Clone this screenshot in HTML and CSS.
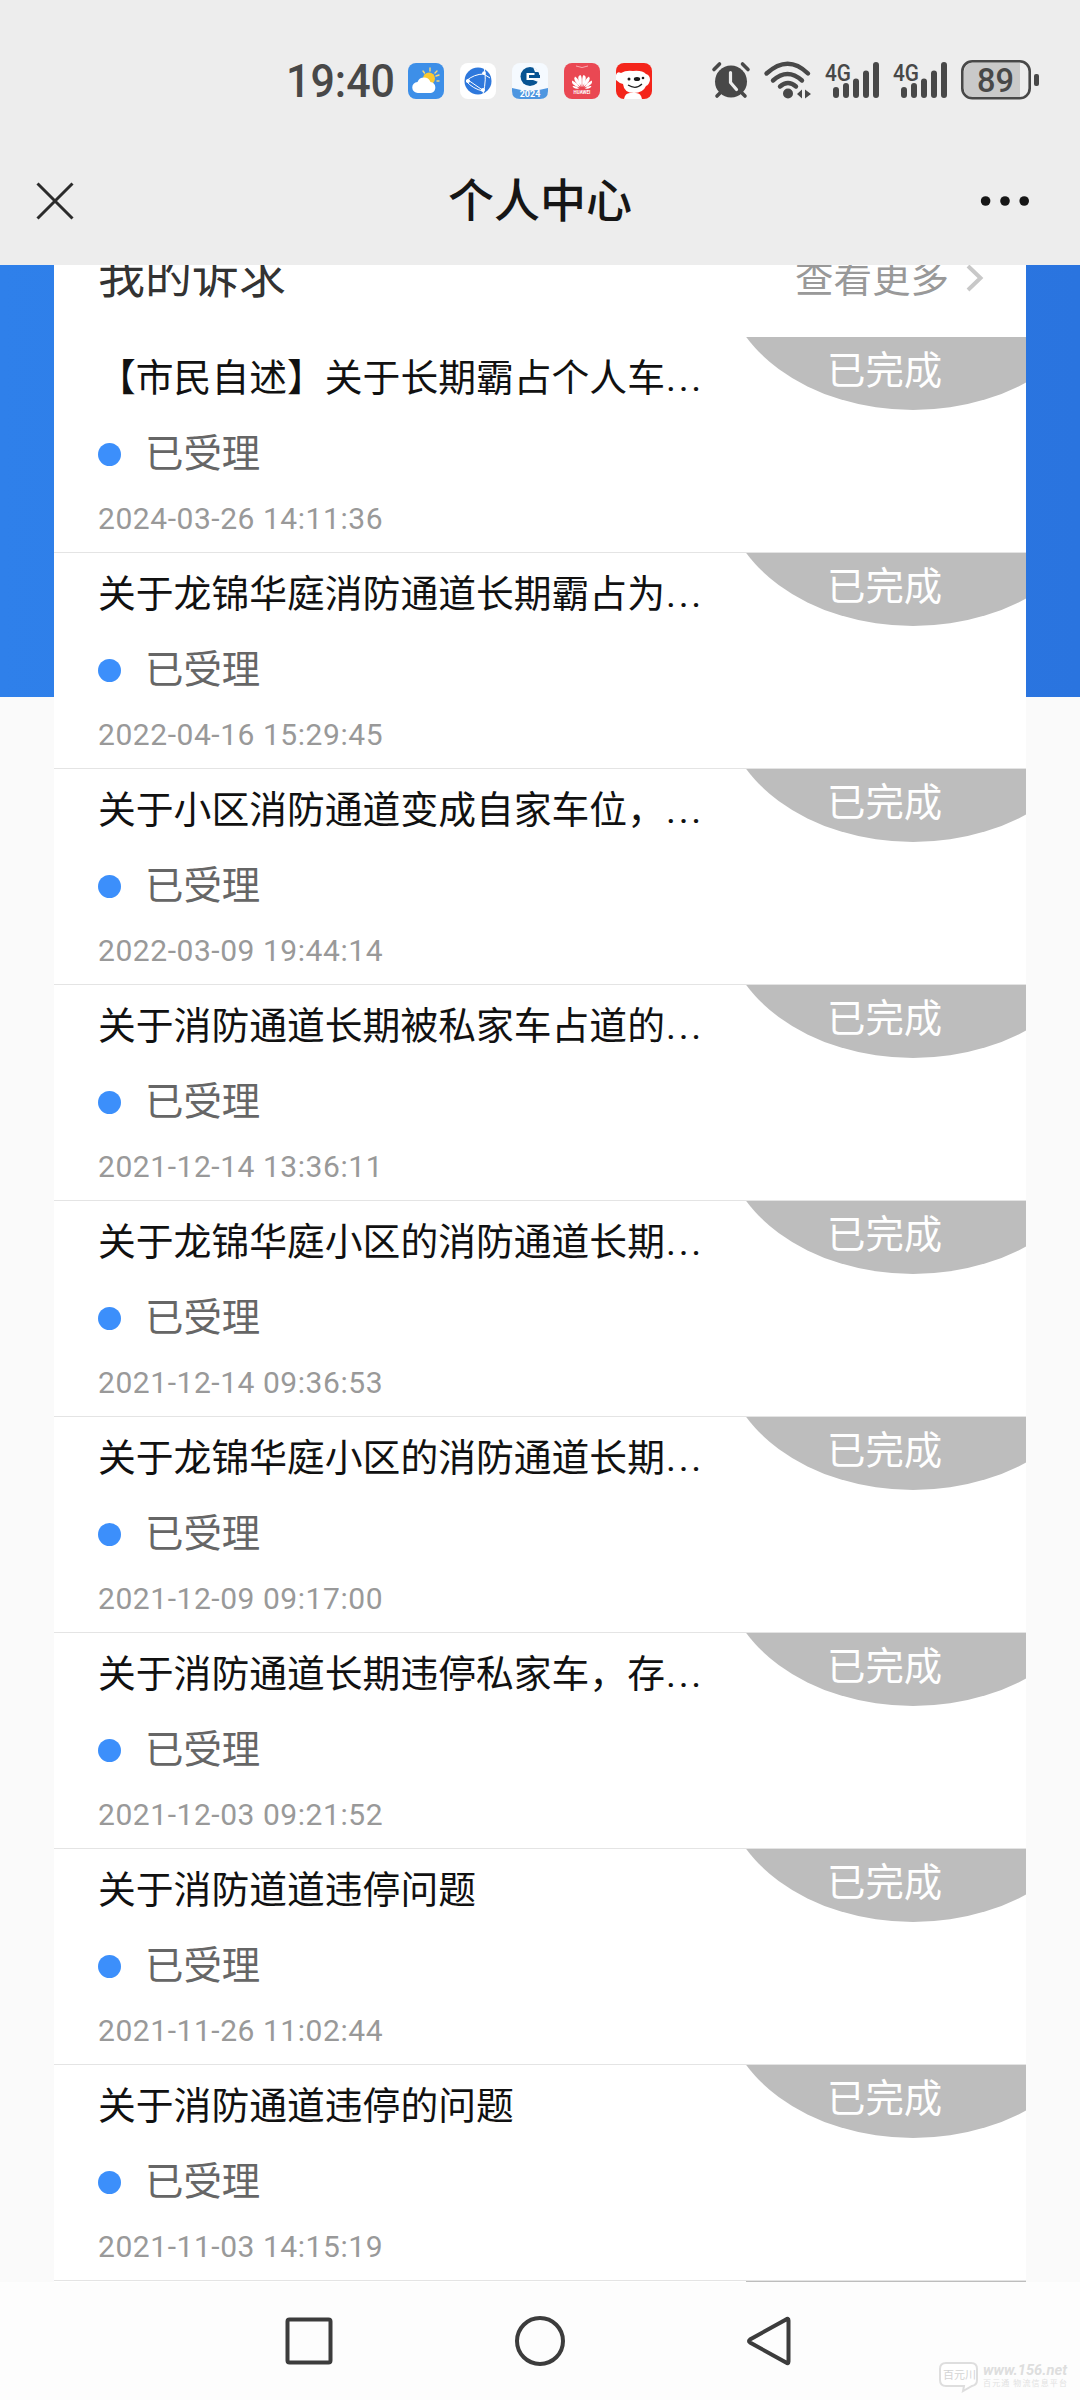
FILE: index.html
```html
<!DOCTYPE html>
<html lang="zh-CN">
<head>
<meta charset="utf-8">
<title>个人中心</title>
<link rel="stylesheet" href="styles.css">
</head>
<body>
<header class="top">
  <div class="status-bar">
    <svg class="clock" viewBox="0 0 122 56"><text x="0" y="45" textLength="109" lengthAdjust="spacingAndGlyphs">19:40</text></svg>
    <div class="apps">
      <svg viewBox="0 0 36 36"><rect width="36" height="36" rx="8" fill="#3d8fe8"/><g stroke="#f6d878" stroke-width="1.4" stroke-linecap="round"><path d="M22 5v3M15 8l1.500 2M29 8l-2 2M31 18h-2M28 13l3-1"/></g><circle cx="21" cy="15.500" r="6" fill="#fbc92f"/><path d="M10 30a5.500 5.500 0 0 1-.5-11 7 7 0 0 1 13 0 5.600 5.600 0 0 1 .5 11z" fill="#fff"/></svg>
      <svg viewBox="0 0 36 36"><rect width="36" height="36" rx="8" fill="#fff"/><circle cx="18" cy="18" r="13.500" fill="#2e78dc"/><g fill="none" stroke="#fff" stroke-width="1"><path d="M6 18q8-7 18-7M6 18q7 8 17 10M24 4q3 12-1 27M8 17l16 11M22 10l8 5"/></g><g fill="#fff"><circle cx="8" cy="18" r="2"/><circle cx="24" cy="10" r="1.700"/><circle cx="23" cy="27" r="2"/></g></svg>
      <svg viewBox="0 0 36 36"><rect width="36" height="36" rx="8" fill="#f5faff"/><path d="M0 25q18 5 36 0v3q0 8-8 8H8q-8 0-8-8z" fill="#4e96e0"/><circle cx="18" cy="13.500" r="9.500" fill="#075493"/><path d="M14.500 10h8v7h-8z" fill="#fff"/><path d="M17 12h11v3H17z" fill="#075493"/><path d="M21 15h8v5l-8-3zM21 4l8 5h-6z" fill="#f5faff"/><text x="18" y="34" text-anchor="middle" class="app-year">2024</text></svg>
      <svg viewBox="0 0 36 36"><rect width="36" height="36" rx="8" fill="#ea4853"/><path d="M12 3q6 3 12 0" fill="none" stroke="#f8aab0"/><g fill="#fff"><path d="M17.500 24q-6-11-1-12 2 2 1 12zM18.500 24q6-11 1-12-2 2-1 12zM16.500 24Q8 17 11 13.500q4 2 5.500 10.500zM19.500 24q8.500-7 5.500-10.500-4 2-5.500 10.500zM15.500 24.500Q7 22 8 17.500q5 2 7.500 7zM20.500 24.500q8.500-2.500 7.500-7-5 2-7.500 7zM15 25.500q-5 1-6.500-2.500 4-.5 6.500 2.500zM21 25.500q5 1 6.500-2.500-4-.5-6.500 2.500z"/></g><text x="18" y="31" text-anchor="middle" class="app-brand">HUAWEI</text></svg>
      <svg viewBox="0 0 36 36"><rect width="36" height="36" rx="8" fill="#f4251b"/><path d="M0 12q1-4 5-2 5-3 12-2 9-1 13 3 4 1 4 6-1 5-4 6-3 7-12 7-10 0-11-9-4-1-7-4z" fill="#fff"/><path d="M8 36q1-6 6-6h6q5 0 6 6z" fill="#fff"/><g fill="#1b1b1b"><ellipse cx="21" cy="16" rx="3.200" ry="2"/><circle cx="13" cy="16" r="1.500"/><circle cx="27" cy="15" r="1.300"/></g><path d="M12 22q8 5 14-1" fill="none" stroke="#222" stroke-width="1.200"/></svg>
    </div>
    <div class="indicators">
      <svg class="alarm" viewBox="0 0 38 38"><g fill="none" stroke="#484848" stroke-width="3.600" stroke-linecap="round"><path d="M2 8.500l5.500-5.500M30.500 3L36 8.500M9 31l-4 4M29 31l4 4"/></g><circle cx="19" cy="20.500" r="16" fill="#484848"/><path d="M18.500 11.500v10l6 7" fill="none" stroke="#ededed" stroke-width="3.200" stroke-linecap="round" stroke-linejoin="round"/></svg>
      <svg class="wifi" viewBox="0 0 48 38"><g fill="none" stroke="#484848" stroke-width="4.400" stroke-linecap="round"><path d="M2.500 12.500Q24-7 44 12.500M9 19.500q14.500-13 29 0M16 25.500q8-7 16 0"/></g><circle cx="24" cy="32.500" r="5" fill="#484848"/><path d="M33 33l5-4.500v9zM47 33l-6-4.500v9z" fill="#484848"/></svg>
      <svg class="signal" viewBox="0 0 55 38"><g stroke="#484848" stroke-width="6" stroke-linecap="round"><path d="M11 29v5M21 25v9M31 20.500v13.500M41 12.500v21.500M51 4v30"/></g><text x="0" y="19.500" class="net" textLength="26" lengthAdjust="spacingAndGlyphs">4G</text></svg>
      <svg class="signal" viewBox="0 0 55 38"><g stroke="#484848" stroke-width="6" stroke-linecap="round"><path d="M11 29v5M21 25v9M31 20.500v13.500M41 12.500v21.500M51 4v30"/></g><text x="0" y="19.500" class="net" textLength="26" lengthAdjust="spacingAndGlyphs">4G</text></svg>
      <svg class="battery" viewBox="0 0 78 40"><path d="M12 2.500h47v35H12a9 9 0 0 1-9-9v-17a9 9 0 0 1 9-9z" fill="#c9c9c9"/><rect x="1.300" y="1.300" width="67.400" height="37" rx="10" fill="none" stroke="#484848" stroke-width="2.600"/><rect x="73" y="14" width="5" height="12" rx="2" fill="#484848"/><text x="16" y="32" class="level" textLength="37" lengthAdjust="spacingAndGlyphs">89</text></svg>
    </div>
  </div>
  <div class="title-bar">
    <svg class="close" viewBox="0 0 38 38"><path d="M1.500 1.500l35 35M36.500 1.500l-35 35" stroke="#2b2b2b" stroke-width="3"/></svg>
    <h1>个人中心</h1>
    <svg class="more" viewBox="0 0 50 10"><g fill="#161616"><circle cx="5.600" cy="5" r="4.800"/><circle cx="25" cy="5" r="4.800"/><circle cx="44.200" cy="5" r="4.800"/></g></svg>
  </div>
</header>
<main class="page">
  <section class="card">
    <div class="card-head">
      <h2>我的诉求</h2>
      <a class="all">查看更多<svg viewBox="0 0 18 28"><path d="M2 2l12.500 12L2 26" fill="none" stroke="#c8c8c8" stroke-width="4"/></svg></a>
    </div>
    <article class="item"><h3>【市民自述】关于长期霸占个人车<span class="dots">...</span></h3><p class="state">已受理</p><time>2024-03-26 14:11:36</time><span class="tag">已完成</span></article>
    <article class="item"><h3>关于龙锦华庭消防通道长期霸占为<span class="dots">...</span></h3><p class="state">已受理</p><time>2022-04-16 15:29:45</time><span class="tag">已完成</span></article>
    <article class="item"><h3>关于小区消防通道变成自家车位，<span class="dots">...</span></h3><p class="state">已受理</p><time>2022-03-09 19:44:14</time><span class="tag">已完成</span></article>
    <article class="item"><h3>关于消防通道长期被私家车占道的<span class="dots">...</span></h3><p class="state">已受理</p><time>2021-12-14 13:36:11</time><span class="tag">已完成</span></article>
    <article class="item"><h3>关于龙锦华庭小区的消防通道长期<span class="dots">...</span></h3><p class="state">已受理</p><time>2021-12-14 09:36:53</time><span class="tag">已完成</span></article>
    <article class="item"><h3>关于龙锦华庭小区的消防通道长期<span class="dots">...</span></h3><p class="state">已受理</p><time>2021-12-09 09:17:00</time><span class="tag">已完成</span></article>
    <article class="item"><h3>关于消防通道长期违停私家车，存<span class="dots">...</span></h3><p class="state">已受理</p><time>2021-12-03 09:21:52</time><span class="tag">已完成</span></article>
    <article class="item"><h3>关于消防道道违停问题</h3><p class="state">已受理</p><time>2021-11-26 11:02:44</time><span class="tag">已完成</span></article>
    <article class="item"><h3>关于消防通道违停的问题</h3><p class="state">已受理</p><time>2021-11-03 14:15:19</time><span class="tag">已完成</span></article>
    <div class="next"></div>
  </section>
</main>
<nav class="nav">
  <svg viewBox="0 0 52 52"><rect x="4.500" y="4.500" width="43" height="43" rx="2" /></svg>
  <svg viewBox="0 0 52 52"><circle cx="26" cy="26" r="23"/></svg>
  <svg viewBox="0 0 52 52"><path d="M43.500 5.500v41q0 3-2.500 1L5 27.500q-2-1.500 0-3L41 4.500q2.500-2 2.500 1z"/></svg>
</nav>
<svg class="mark" viewBox="0 0 140 36"><path d="M10 4h25q6 0 6 6v11q0 5-5 6l-9 5 1-5H10q-6 0-6-6V10q0-6 6-6z" fill="#fff" stroke="#dedede" stroke-width="2"/><text x="7" y="20" class="mark-cn">百元川</text><text x="47" y="16" class="mark-url" textLength="84" lengthAdjust="spacingAndGlyphs">www.156.net</text><text x="47" y="27" class="mark-sub" textLength="84">百元通 物流信息平台</text></svg>
</body>
</html>
```
FILE: styles.css
```css
* { box-sizing: border-box; }
body {
  margin: 0;
  width: 1080px;
  height: 2400px;
  overflow: hidden;
  display: flex;
  flex-direction: column;
  background: #fdfdfd;
  font-family: Roboto, "Noto Sans CJK SC", sans-serif;
}
svg { display: block; flex: none; overflow: visible; }
h1, h2, h3, p { margin: 0; font-weight: 400; }

.top { flex: none; height: 265px; background: #ededed; }
.status-bar { height: 160px; display: flex; align-items: center; padding-left: 286px; }
.clock { width: 122px; height: 56px; font-size: 47px; fill: #484848; font-weight: 500; }
.apps { display: flex; gap: 16px; padding-top: 2px; }
.apps svg { width: 36px; height: 36px; }
.app-year { font: bold 9px Roboto, sans-serif; fill: #fff; }
.app-brand { font: bold 4.500px Roboto, sans-serif; fill: #fff; }
.indicators { display: flex; align-items: center; margin-left: 60px; }
.alarm { width: 38px; height: 38px; }
.wifi { width: 48px; height: 38px; margin-left: 14px; }
.signal { width: 55px; height: 38px; margin-left: 13px; }
.battery { width: 78px; height: 40px; margin-left: 13px; }
.net { font: 500 24px Roboto, sans-serif; fill: #484848; }
.level { font: 500 34px Roboto, sans-serif; fill: #484848; }

.title-bar {
  height: 82px;
  display: grid;
  grid-template-columns: 1fr auto 1fr;
  align-items: center;
  padding: 0 50px 0 36px;
}
.close { width: 38px; height: 38px; }
.title-bar h1 { font-size: 46px; line-height: 60px; font-weight: 500; color: #161616; margin-left: 14px; }
.more { width: 50px; height: 10px; justify-self: end; }

.page {
  flex: none;
  height: 2017px;
  overflow: hidden;
  padding: 0 54px;
  background: linear-gradient(90deg, #2f80ea, #2a74df) 0 0 / 100% 432px no-repeat #fafafa;
}
.card { background: #fff; height: 100%; }
.card-head { height: 72px; display: flex; justify-content: space-between; padding: 0 42px 0 44px; }
.card-head h2 { font-size: 47px; line-height: 60px; color: #333; margin-top: -18px; }
.all { display: flex; align-items: center; height: 60px; margin-top: -20px; font-size: 38.500px; color: #999; }
.all svg { width: 18px; height: 28px; margin-left: 17px; margin-top: 6px; }

.item { position: relative; height: 216px; padding: 17px 44px 0; border-bottom: 1px solid #e4e4e4; }
.item h3 {
  width: 612px;
  font-size: 37.800px;
  line-height: 48px;
  color: #111;
  white-space: nowrap;
}
.dots { letter-spacing: 2.700px; margin-left: 1px; }
.state { display: flex; align-items: center; gap: 24px; margin-top: 28px; font-size: 38.400px; line-height: 48px; color: #666; }
.state::before { content: ""; width: 23px; height: 23px; border-radius: 50%; background: #3c8ffb; }
.item time { display: block; margin-top: 23px; font-size: 30px; line-height: 36px; color: #999; letter-spacing: .55px; }
.tag {
  position: absolute;
  top: 0;
  right: 0;
  width: 281px;
  height: 74px;
  overflow: hidden;
  padding-left: 82px;
  font-size: 38.400px;
  line-height: 68px;
  color: #fff;
  z-index: 0;
}
.tag::before {
  content: "";
  position: absolute;
  z-index: -1;
  left: -22px;
  bottom: 1px;
  width: 380px;
  height: 280px;
  border-radius: 50%;
  background: #bdbdbd;
}
.next { height: 1px; width: 280px; margin-left: auto; background: #bdbdbd; }

.nav { flex: none; height: 118px; display: flex; justify-content: center; gap: 179px; padding-top: 33px; }
.nav svg { width: 52px; height: 52px; fill: none; stroke: #3c3c3c; stroke-width: 4; }
.mark { position: absolute; left: 936px; top: 2359px; width: 140px; height: 36px; }
.mark-cn { font: 11px "Noto Sans CJK SC", sans-serif; fill: #d4d4d4; }
.mark-url { font: italic bold 15px Roboto, sans-serif; fill: #dedede; }
.mark-sub { font: 8px "Noto Sans CJK SC", sans-serif; fill: #e2e2e2; }
```
